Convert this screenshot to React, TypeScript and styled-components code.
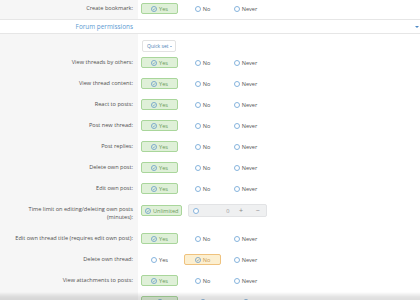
import React from 'react';
import styled, { createGlobalStyle, css } from 'styled-components';

const Global = createGlobalStyle`
  html, body { margin: 0; padding: 0; background: #fff; }
  body {
    font-family: "Open Sans", "Noto Sans", sans-serif;
    width: 420px;
    height: 300px;
    overflow: hidden;
  }
`;

const Page = styled.div`
  margin-top: -2px;
  width: 420px;
`;

const Row = styled.div`
  display: grid;
  grid-template-columns: 138px 1fr;
`;

const Label = styled.div`
  background: #f6f6f6;
  text-align: right;
  padding: 6px 5px 7px 0;
  min-height: 8px;
  font-size: 5.6px;
  line-height: 8px;
  color: #505050;
`;

const Value = styled.div<{ $top?: number }>`
  display: flex;
  align-items: flex-start;
  gap: 6px;
  padding: ${(p) => p.$top ?? 5}px 0 5px 3px;
`;

const Header = styled.div`
  display: grid;
  grid-template-columns: 138px 1fr;
  align-items: center;
  height: 13px;
  background: #fff;
  border-top: 1px solid #e6e6e6;
  border-bottom: 1px solid #e6e6e6;
`;

const HeaderTitle = styled.div`
  text-align: right;
  padding-right: 5px;
  font-size: 6.4px;
  color: #5b9ad2;
`;

const HeaderTools = styled.div`
  display: flex;
  justify-content: flex-end;
  padding-right: 1px;
`;

const Caret = styled.span<{ $size?: number }>`
  display: inline-block;
  width: 0;
  height: 0;
  border-left: ${(p) => p.$size ?? 2.5}px solid transparent;
  border-right: ${(p) => p.$size ?? 2.5}px solid transparent;
  border-top: ${(p) => (p.$size ?? 2.5) * 0.9}px solid #4f8ac6;
`;

const QuickRow = styled.div`
  display: grid;
  grid-template-columns: 138px 1fr;
  height: 18px;
`;

const GrayCell = styled.div`
  background: #f6f6f6;
`;

const QuickCell = styled.div`
  display: flex;
  align-items: flex-start;
  padding: 6px 0 0 4px;
`;

const QuickButton = styled.span`
  display: inline-flex;
  align-items: center;
  gap: 1.5px;
  box-sizing: border-box;
  height: 12px;
  padding: 0 3px 0 4px;
  border: 1px solid #e2e2e2;
  border-radius: 2px;
  background: #fff;
  font-size: 5px;
  line-height: 1;
  color: #4a7db4;
`;

type Sel = 'yes' | 'no' | undefined;

const Option = styled.span<{ $sel?: Sel }>`
  display: inline-flex;
  align-items: center;
  justify-content: center;
  gap: 2px;
  box-sizing: border-box;
  min-width: 37px;
  height: 11px;
  padding: 0 3px;
  border: 1px solid transparent;
  border-radius: 2px;
  font-size: 5.6px;
  color: #555;
  white-space: nowrap;
  ${(p) =>
    p.$sel === 'yes' &&
    css`
      background: #dff0d8;
      border-color: #a9d69b;
      color: #6a9a5c;
    `}
  ${(p) =>
    p.$sel === 'no' &&
    css`
      background: #fcefd0;
      border-color: #efc27e;
      color: #c99b52;
    `}
`;

const Radio = styled.span`
  display: inline-block;
  box-sizing: border-box;
  width: 6px;
  height: 6px;
  border: 1px solid #86b4dd;
  border-radius: 50%;
  background: #fff;
`;

const Counter = styled.div`
  display: flex;
  align-items: center;
  box-sizing: border-box;
  width: 79px;
  height: 13px;
  margin-top: -1px;
  padding-left: 4px;
  background: #eff0f1;
  border: 1px solid #e2e3e5;
  border-radius: 2px;
  font-size: 5.6px;
  color: #9a9a9a;
`;

const CounterNum = styled.span`
  flex: 1;
  text-align: right;
  padding-right: 3px;
`;

const CounterBtn = styled.span`
  width: 17px;
  text-align: center;
  font-size: 7px;
  color: #888;
`;

const Shadow = styled.div`
  position: fixed;
  left: 0;
  right: 0;
  bottom: 0;
  height: 8px;
  background: linear-gradient(to bottom, rgba(0, 0, 0, 0), rgba(0, 0, 0, 0.11) 60%, rgba(0, 0, 0, 0.13));
`;

const Check = () => (
  <svg width="6" height="6" viewBox="0 0 12 12">
    <circle cx="6" cy="6" r="5.1" fill="none" stroke="#5b93c9" strokeWidth="1.4" />
    <path d="M3.6 6.2 L5.3 7.8 L8.4 4.5" fill="none" stroke="#5b93c9" strokeWidth="1.4" />
  </svg>
);

const Choice = ({ text, sel }: { text?: string; sel?: Sel }) => (
  <Option $sel={sel}>
    {sel ? <Check /> : <Radio />}
    {text}
  </Option>
);

const YesNoNever = ({ value, hideText }: { value: 'yes' | 'no'; hideText?: boolean }) => (
  <>
    <Choice text={hideText ? undefined : 'Yes'} sel={value === 'yes' ? 'yes' : undefined} />
    <Choice text={hideText ? undefined : 'No'} sel={value === 'no' ? 'no' : undefined} />
    <Choice text={hideText ? undefined : 'Never'} />
  </>
);

const PermRow = ({
  label,
  value,
  hideText,
}: {
  label?: React.ReactNode;
  value: 'yes' | 'no';
  hideText?: boolean;
}) => (
  <Row>
    <Label>{label}</Label>
    <Value>
      <YesNoNever value={value} hideText={hideText} />
    </Value>
  </Row>
);

const forumRows: [string, 'yes' | 'no'][] = [
  ['View threads by others:', 'yes'],
  ['View thread content:', 'yes'],
  ['React to posts:', 'yes'],
  ['Post new thread:', 'yes'],
  ['Post replies:', 'yes'],
  ['Delete own post:', 'yes'],
  ['Edit own post:', 'yes'],
];

export default function App() {
  return (
    <>
      <Global />
      <Page>
        <PermRow label="Create bookmark:" value="yes" />
        <Header>
          <HeaderTitle>Forum permissions</HeaderTitle>
          <HeaderTools>
            <Caret />
          </HeaderTools>
        </Header>
        <QuickRow>
          <GrayCell />
          <QuickCell>
            <QuickButton>
              Quick set <Caret $size={1.8} />
            </QuickButton>
          </QuickCell>
        </QuickRow>
        {forumRows.map(([l, v]) => (
          <PermRow key={l} label={l} value={v} />
        ))}
        <Row>
          <Label>
            Time limit on editing/deleting own posts
            <br />
            (minutes):
          </Label>
          <Value $top={6}>
            <Choice text="Unlimited" sel="yes" />
            <Counter>
              <Radio />
              <CounterNum>0</CounterNum>
              <CounterBtn>+</CounterBtn>
              <CounterBtn>−</CounterBtn>
            </Counter>
          </Value>
        </Row>
        <PermRow label="Edit own thread title (requires edit own post):" value="yes" />
        <PermRow label="Delete own thread:" value="no" />
        <PermRow label="View attachments to posts:" value="yes" />
        <PermRow value="yes" hideText />
      </Page>
      <Shadow />
    </>
  );
}
